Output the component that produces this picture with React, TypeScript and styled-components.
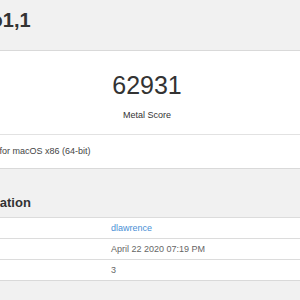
import { createGlobalStyle, styled } from 'styled-components';

const GlobalStyle = createGlobalStyle`
  html, body {
    margin: 0;
    padding: 0;
    background: #f1f1f1;
    overflow: hidden;
  }
  body {
    font-family: 'Liberation Sans', Arial, sans-serif;
    color: #333;
  }
`;

const resultRows = [
  { label: 'User', value: 'dlawrence', link: true },
  { label: 'Upload Date', value: 'April 22 2020 07:19 PM' },
  { label: 'Views', value: '3' },
];

const App = () => {
  return (
    <>
      <GlobalStyle />
      <Page>
        <Title>iMacPro1,1</Title>
        <ScoreCard>
          <ScoreSection>
            <Score>62931</Score>
            <ScoreLabel>Metal Score</ScoreLabel>
          </ScoreSection>
          <CardFooter>Geekbench 5.2.3 Tryout for macOS x86 (64-bit)</CardFooter>
        </ScoreCard>
        <SectionHeading>Result Information</SectionHeading>
        <InfoTable>
          {resultRows.map((row) => (
            <InfoRow key={row.label}>
              <InfoLabel>{row.label}</InfoLabel>
              <InfoValue $link={row.link}>{row.value}</InfoValue>
            </InfoRow>
          ))}
        </InfoTable>
      </Page>
    </>
  );
};

export default App;

const Page = styled.div`
  width: 494px;
  margin-left: -100px;
`;

const Title = styled.h1`
  margin: 8px 0 18px;
  padding-left: 25px;

  font-size: 20px;
  font-weight: 700;
  line-height: 24px;
  color: #333;
`;

const ScoreCard = styled.div`
  background: #fff;
  border-top: 1px solid #d9d9d9;
  border-bottom: 1px solid #d9d9d9;
`;

const ScoreSection = styled.div`
  display: flex;
  flex-direction: column;
  align-items: center;

  height: 84px;
  padding-top: 20px;
  box-sizing: border-box;
  border-bottom: 1px solid #e2e2e2;
`;

const Score = styled.div`
  font-size: 25px;
  font-weight: 400;
  line-height: 28px;
  color: #333;
`;

const ScoreLabel = styled.div`
  margin-top: 10px;

  font-size: 9px;
  line-height: 12px;
  color: #333;
`;

const CardFooter = styled.div`
  height: 33px;
  padding-left: 1px;

  font-size: 9px;
  line-height: 33px;
  color: #444;
  white-space: nowrap;
`;

const SectionHeading = styled.h2`
  margin: 25px 0 6px;
  padding-left: 16px;

  font-size: 13px;
  font-weight: 700;
  line-height: 17px;
  color: #333;
`;

const InfoTable = styled.div`
  margin-left: 16px;
  background: #fff;
  border-bottom: 1px solid #d9d9d9;
`;

const InfoRow = styled.div`
  display: grid;
  grid-template-columns: 187px 1fr;

  height: 21px;
  box-sizing: border-box;
  border-top: 1px solid #dcdcdc;

  font-size: 9px;
  line-height: 20px;
`;

const InfoLabel = styled.div`
  padding: 0 8px;
  color: #333;
`;

const InfoValue = styled.div<{ $link?: boolean }>`
  padding: 0 8px;
  color: ${(props) => (props.$link ? '#4a8fd6' : '#666')};
`;
